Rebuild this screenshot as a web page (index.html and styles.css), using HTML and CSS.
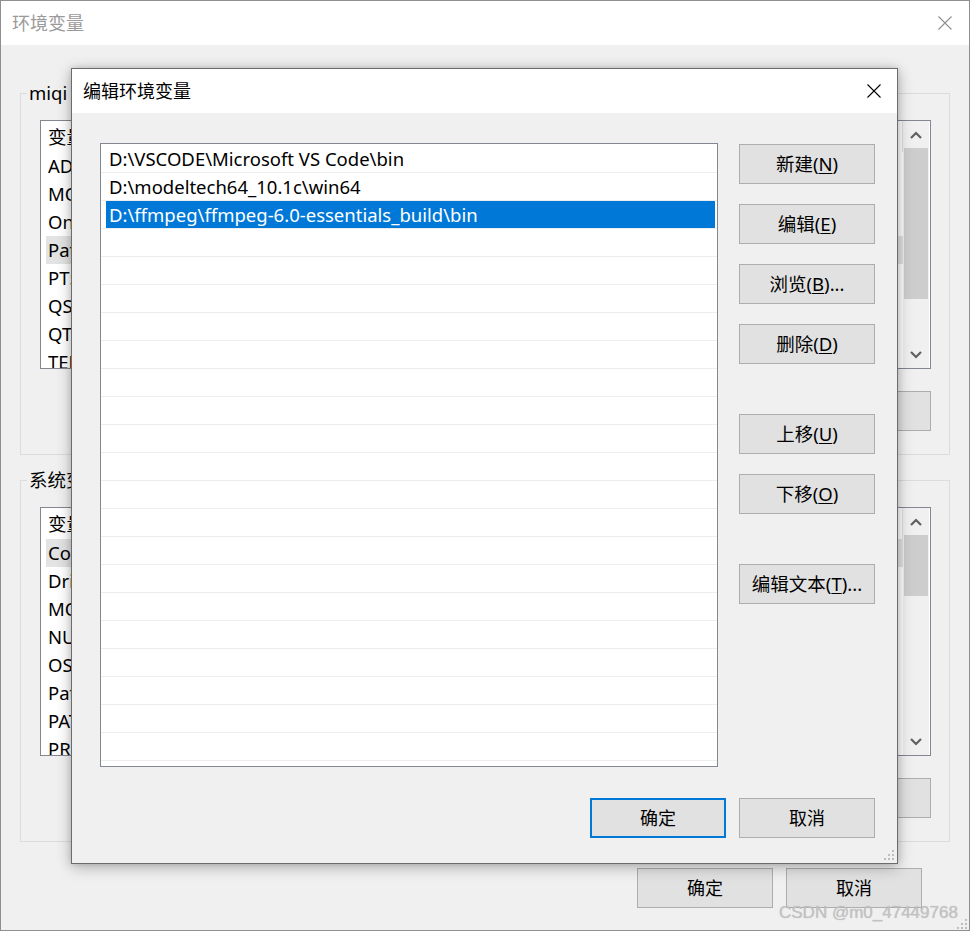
FILE: index.html
```html
<!DOCTYPE html>
<html lang="zh-CN">
<head>
<meta charset="utf-8">
<title>环境变量</title>
<link rel="stylesheet" href="styles.css">
</head>
<body>
<div class="win">
  <div class="win-title">
    <span>环境变量</span>
    <svg class="x-icon" width="14" height="14" viewBox="0 0 14 14"><path d="M0.5 0.5 L13.5 13.5 M13.5 0.5 L0.5 13.5" stroke="#8e8e8e" stroke-width="1.1" fill="none"/></svg>
  </div>
  <div class="win-body">
    <fieldset class="group">
      <legend>miqi 的用户变量(<u>U</u>)</legend>
      <div class="group-inner">
        <div class="lv">
          <div class="lv-main">
            <div class="lv-head"><span class="c1">变量</span><span class="c2">值</span></div>
            <div class="lv-row"><span class="c1">ADSK_CLM_WPAD_PROXY_CHECK</span><span class="c2">FALSE</span></div>
            <div class="lv-row"><span class="c1">MOZ_PLUGIN_PATH</span><span class="c2">C:\Program Files\plugins\</span></div>
            <div class="lv-row"><span class="c1">OneDrive</span><span class="c2">C:\Users\miqi\OneDrive</span></div>
            <div class="lv-row hl"><span class="c1">Path</span><span class="c2">D:\VSCODE\Microsoft VS Code\bin;D:\modeltech64_10.1c\win64;D:\ffmpeg\ffmpeg-6.0-essentials_build\bin</span></div>
            <div class="lv-row"><span class="c1">PT5HOME</span><span class="c2">C:\Program Files\Cisco Packet Tracer</span></div>
            <div class="lv-row"><span class="c1">QSYS_ROOTDIR</span><span class="c2">D:\quartus\bin64</span></div>
            <div class="lv-row"><span class="c1">QT_DEVICE_PIXEL_RATIO</span><span class="c2">auto</span></div>
            <div class="lv-row"><span class="c1">TEMP</span><span class="c2">C:\Users\miqi\AppData\Local\Temp</span></div>
            <div class="lv-row"><span class="c1">TMP</span><span class="c2">C:\Users\miqi\AppData\Local\Temp</span></div>
          </div>
          <div class="sb">
            <div class="sb-btn"><svg width="12" height="8" viewBox="0 0 12 8"><path d="M1 7 L6 2 L11 7" stroke="#606060" stroke-width="2.2" fill="none"/></svg></div>
            <div class="sb-track"><div class="sb-thumb thumb-user"></div></div>
            <div class="sb-btn"><svg width="12" height="8" viewBox="0 0 12 8"><path d="M1 1 L6 6 L11 1" stroke="#606060" stroke-width="2.2" fill="none"/></svg></div>
          </div>
        </div>
        <div class="btnrow">
          <button class="btn">新建(<u>N</u>)...</button>
          <button class="btn">编辑(<u>E</u>)...</button>
          <button class="btn">删除(<u>D</u>)</button>
        </div>
      </div>
    </fieldset>
    <fieldset class="group group-sys">
      <legend>系统变量(<u>S</u>)</legend>
      <div class="group-inner">
        <div class="lv">
          <div class="lv-main">
            <div class="lv-head"><span class="c1">变量</span><span class="c2">值</span></div>
            <div class="lv-row hl"><span class="c1">ComSpec</span><span class="c2">C:\Windows\system32\cmd.exe</span></div>
            <div class="lv-row"><span class="c1">DriverData</span><span class="c2">C:\Windows\System32\Drivers\DriverData</span></div>
            <div class="lv-row"><span class="c1">MOZ_PLUGIN_PATH</span><span class="c2">C:\Program Files\plugins\</span></div>
            <div class="lv-row"><span class="c1">NUMBER_OF_PROCESSORS</span><span class="c2">16</span></div>
            <div class="lv-row"><span class="c1">OS</span><span class="c2">Windows_NT</span></div>
            <div class="lv-row"><span class="c1">Path</span><span class="c2">C:\Windows\system32;C:\Windows;</span></div>
            <div class="lv-row"><span class="c1">PATHEXT</span><span class="c2">.COM;.EXE;.BAT;.CMD;.VBS;.VBE;.JS;.JSE</span></div>
            <div class="lv-row"><span class="c1">PROCESSOR_ARCHITECTURE</span><span class="c2">AMD64</span></div>
          </div>
          <div class="sb">
            <div class="sb-btn"><svg width="12" height="8" viewBox="0 0 12 8"><path d="M1 7 L6 2 L11 7" stroke="#606060" stroke-width="2.2" fill="none"/></svg></div>
            <div class="sb-track"><div class="sb-thumb thumb-sys"></div></div>
            <div class="sb-btn"><svg width="12" height="8" viewBox="0 0 12 8"><path d="M1 1 L6 6 L11 1" stroke="#606060" stroke-width="2.2" fill="none"/></svg></div>
          </div>
        </div>
        <div class="btnrow">
          <button class="btn">新建(<u>W</u>)...</button>
          <button class="btn">编辑(<u>I</u>)...</button>
          <button class="btn">删除(<u>L</u>)</button>
        </div>
      </div>
    </fieldset>
    <div class="win-actions">
      <button class="btn zh">确定</button>
      <button class="btn zh">取消</button>
    </div>
  </div>
  <svg class="grip grip-win" width="11" height="11" viewBox="0 0 11 11"><g fill="#bdbdbd"><rect x="8" y="0" width="2" height="2"/><rect x="4" y="4" width="2" height="2"/><rect x="8" y="4" width="2" height="2"/><rect x="0" y="8" width="2" height="2"/><rect x="4" y="8" width="2" height="2"/><rect x="8" y="8" width="2" height="2"/></g></svg>
</div>

<div class="dlg">
  <div class="dlg-title">
    <span>编辑环境变量</span>
    <svg class="x-icon" width="14" height="14" viewBox="0 0 14 14"><path d="M0.5 0.5 L13.5 13.5 M13.5 0.5 L0.5 13.5" stroke="#000" stroke-width="1.1" fill="none"/></svg>
  </div>
  <div class="dlg-body">
    <div class="dlg-main">
      <div class="pathlist">
        <div class="prow"><span>D:\VSCODE\Microsoft VS Code\bin</span></div>
        <div class="prow"><span>D:\modeltech64_10.1c\win64</span></div>
        <div class="prow sel"><span>D:\ffmpeg\ffmpeg-6.0-essentials_build\bin</span></div>
        <div class="prow"><span></span></div>
        <div class="prow"><span></span></div>
        <div class="prow"><span></span></div>
        <div class="prow"><span></span></div>
        <div class="prow"><span></span></div>
        <div class="prow"><span></span></div>
        <div class="prow"><span></span></div>
        <div class="prow"><span></span></div>
        <div class="prow"><span></span></div>
        <div class="prow"><span></span></div>
        <div class="prow"><span></span></div>
        <div class="prow"><span></span></div>
        <div class="prow"><span></span></div>
        <div class="prow"><span></span></div>
        <div class="prow"><span></span></div>
        <div class="prow"><span></span></div>
        <div class="prow"><span></span></div>
        <div class="prow"><span></span></div>
        <div class="prow"><span></span></div>
        <div class="prow"><span></span></div>
      </div>
      <div class="dlg-btns">
        <button class="btn">新建(<u>N</u>)</button>
        <button class="btn">编辑(<u>E</u>)</button>
        <button class="btn">浏览(<u>B</u>)...</button>
        <button class="btn">删除(<u>D</u>)</button>
        <button class="btn sep">上移(<u>U</u>)</button>
        <button class="btn">下移(<u>O</u>)</button>
        <button class="btn sep">编辑文本(<u>T</u>)...</button>
      </div>
    </div>
    <div class="dlg-actions">
      <button class="btn zh btn-default">确定</button>
      <button class="btn zh">取消</button>
    </div>
  </div>
  <svg class="grip grip-dlg" width="11" height="11" viewBox="0 0 11 11"><g fill="#bdbdbd"><rect x="8" y="0" width="2" height="2"/><rect x="4" y="4" width="2" height="2"/><rect x="8" y="4" width="2" height="2"/><rect x="0" y="8" width="2" height="2"/><rect x="4" y="8" width="2" height="2"/><rect x="8" y="8" width="2" height="2"/></g></svg>
</div>

<div class="watermark">CSDN @m0_47449768</div>
</body>
</html>
```

FILE: styles.css
```css
* { box-sizing: border-box; }

html, body {
  margin: 0;
  padding: 0;
}

body {
  width: 970px;
  height: 931px;
  overflow: hidden;
  position: relative;
  background: #55604c;
  font-family: "Noto Sans", "Noto Sans CJK SC", sans-serif;
  font-size: 18.5px;
  color: #000;
}

u { text-decoration: underline; text-underline-offset: 2px; }

/* ---------- background window ---------- */
.win {
  position: relative;
  width: 970px;
  height: 931px;
  border: 1px solid #8f8f8f;
  background: #f0f0f0;
  display: flex;
  flex-direction: column;
}

.win-title {
  height: 44px;
  flex: none;
  background: #fff;
  display: flex;
  align-items: center;
  justify-content: space-between;
  padding: 0 17px 0 11px;
  color: #9a9a9a;
  font-size: 18px;
  line-height: 24px;
}

.x-icon { display: block; }

.win-body {
  flex: 1;
  padding: 0 19px;
}

.group {
  margin: 38px 0 0;
  padding: 0;
  border: 1px solid #dcdcdc;
  min-width: 0;
}

.group-sys { margin-top: 15px; }

.group legend {
  margin-left: 6px;
  padding: 0 2px;
  line-height: 20px;
  height: 20px;
}

.group-inner {
  padding: 17px 18px 23px 19px;
}

.lv {
  height: 249px;
  border: 1px solid #828790;
  background: #fff;
  display: flex;
  overflow: hidden;
}

.lv-main {
  flex: 1;
  min-width: 0;
  overflow: hidden;
}

.lv-head {
  height: 31px;
  display: flex;
  align-items: center;
  white-space: nowrap;
}

.lv-head .c1 {
  width: 300px;
  padding-left: 7px;
  border-right: 1px solid #e5e5e5;
  line-height: 31px;
}

.lv-head .c2 {
  flex: 1;
  padding-left: 8px;
  border-right: 1px solid #e0e0e0;
  line-height: 31px;
}

.lv-row {
  height: 28px;
  line-height: 28px;
  margin-left: 5px;
  padding-left: 2px;
  display: flex;
  white-space: nowrap;
}

.lv-row .c1 { width: 296px; flex: none; overflow: hidden; }
.lv-row .c2 {
  flex: 1;
  min-width: 0;
  padding: 0 30px 0 8px;
  overflow: hidden;
  text-overflow: ellipsis;
}

.lv-row.hl { background: #e3e3e3; }

.sb {
  width: 26px;
  flex: none;
  margin-right: 1px;
  background: #f0f0f0;
  display: flex;
  flex-direction: column;
}

.sb-btn {
  height: 27px;
  flex: none;
  display: flex;
  align-items: center;
  justify-content: center;
}

.sb-track {
  flex: 1;
  padding: 0 1px;
}

.sb-thumb { background: #cdcdcd; }
.thumb-user { height: 151px; }
.thumb-sys { height: 61px; }

.btnrow {
  margin-top: 22px;
  display: flex;
  justify-content: flex-end;
  gap: 13px;
}

.btn {
  width: 136px;
  height: 40px;
  padding: 0;
  margin: 0;
  background: #e1e1e1;
  border: 1px solid #adadad;
  font-family: "Noto Sans", "Noto Sans CJK SC", sans-serif;
  font-size: 18.5px;
  line-height: 22px;
  color: #000;
  white-space: nowrap;
}

.btn.zh { font-size: 18px; }

.win-actions {
  margin-top: 26px;
  padding-right: 28px;
  display: flex;
  justify-content: flex-end;
  gap: 13px;
}

.grip {
  position: absolute;
  display: block;
}

.grip-win { right: 1px; bottom: 0; }

/* ---------- edit dialog (overlaps the window) ---------- */
.dlg {
  position: absolute;
  left: 71px;
  top: 68px;
  width: 827px;
  height: 796px;
  border: 1px solid #6c6c6c;
  background: #f0f0f0;
  box-shadow: 0 3px 14px rgba(0, 0, 0, 0.28), 0 0 6px rgba(0, 0, 0, 0.12);
  display: flex;
  flex-direction: column;
}

.dlg-title {
  height: 44px;
  flex: none;
  background: #fff;
  display: flex;
  align-items: center;
  justify-content: space-between;
  padding: 0 16px 0 11px;
  font-size: 18px;
  line-height: 24px;
}

.dlg-body {
  flex: 1;
  padding: 30px 22px 0 28px;
}

.dlg-main {
  display: flex;
  gap: 21px;
}

.pathlist {
  width: 618px;
  height: 624px;
  flex: none;
  border: 1px solid #828790;
  background: #fff;
  padding-top: 1px;
  overflow: hidden;
}

.prow {
  height: 28px;
  border-bottom: 1px solid #ededed;
  padding: 0 2px 0 5px;
}

.prow span {
  display: block;
  height: 27px;
  line-height: 27px;
  padding-left: 3px;
  white-space: nowrap;
}

.prow.sel span {
  background: #0078d7;
  color: #fff;
}

.dlg-btns {
  display: flex;
  flex-direction: column;
  gap: 20px;
  padding-top: 1px;
}

.dlg-btns .sep { margin-top: 30px; }

.dlg-actions {
  margin-top: 31px;
  display: flex;
  justify-content: flex-end;
  gap: 13px;
}

.btn-default {
  border: 2px solid #0078d7;
}

.grip-dlg { right: 2px; bottom: 2px; }

/* ---------- watermark ---------- */
.watermark {
  position: absolute;
  left: 779px;
  top: 903px;
  font-family: "Liberation Sans", "DejaVu Sans", sans-serif;
  font-size: 17px;
  line-height: 20px;
  color: #c2c2c2;
  text-shadow: 0 0 1px rgba(110, 110, 110, 0.35);
  white-space: nowrap;
}
```
